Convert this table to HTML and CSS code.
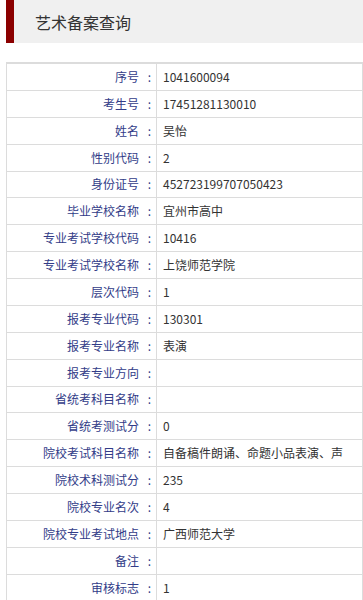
FILE: index.html
```html
<!DOCTYPE html>
<html lang="zh-CN">
<head>
<meta charset="utf-8">
<title>艺术备案查询</title>
<link rel="stylesheet" href="styles.css">
</head>
<body>
<div class="page">
  <div class="header"><span class="title">艺术备案查询</span></div>
  <table class="info">
    <tr><td class="lbl"><span>序号</span><i>:</i></td><td class="val">1041600094</td></tr>
    <tr><td class="lbl"><span>考生号</span><i>:</i></td><td class="val">17451281130010</td></tr>
    <tr><td class="lbl"><span>姓名</span><i>:</i></td><td class="val">吴怡</td></tr>
    <tr><td class="lbl"><span>性别代码</span><i>:</i></td><td class="val">2</td></tr>
    <tr><td class="lbl"><span>身份证号</span><i>:</i></td><td class="val">452723199707050423</td></tr>
    <tr><td class="lbl"><span>毕业学校名称</span><i>:</i></td><td class="val">宜州市高中</td></tr>
    <tr><td class="lbl"><span>专业考试学校代码</span><i>:</i></td><td class="val">10416</td></tr>
    <tr><td class="lbl"><span>专业考试学校名称</span><i>:</i></td><td class="val">上饶师范学院</td></tr>
    <tr><td class="lbl"><span>层次代码</span><i>:</i></td><td class="val">1</td></tr>
    <tr><td class="lbl"><span>报考专业代码</span><i>:</i></td><td class="val">130301</td></tr>
    <tr><td class="lbl"><span>报考专业名称</span><i>:</i></td><td class="val">表演</td></tr>
    <tr><td class="lbl"><span>报考专业方向</span><i>:</i></td><td class="val"></td></tr>
    <tr><td class="lbl"><span>省统考科目名称</span><i>:</i></td><td class="val"></td></tr>
    <tr><td class="lbl"><span>省统考测试分</span><i>:</i></td><td class="val">0</td></tr>
    <tr><td class="lbl"><span>院校考试科目名称</span><i>:</i></td><td class="val">自备稿件朗诵、命题小品表演、声</td></tr>
    <tr><td class="lbl"><span>院校术科测试分</span><i>:</i></td><td class="val">235</td></tr>
    <tr><td class="lbl"><span>院校专业名次</span><i>:</i></td><td class="val">4</td></tr>
    <tr><td class="lbl"><span>院校专业考试地点</span><i>:</i></td><td class="val">广西师范大学</td></tr>
    <tr><td class="lbl"><span>备注</span><i>:</i></td><td class="val"></td></tr>
    <tr><td class="lbl"><span>审核标志</span><i>:</i></td><td class="val">1</td></tr>
  </table>
</div>
</body>
</html>
```
FILE: styles.css
```css
html, body {
  margin: 0;
  padding: 0;
  background: #fff;
  overflow: hidden;
}
body {
  font-family: "Microsoft YaHei", "Noto Sans CJK SC", "Noto Sans", sans-serif;
  font-size: 12px;
  color: #333;
}
.page {
  padding-left: 6px;
}
.header {
  height: 43px;
  background: #f0f0f0;
  border-left: 8px solid #8b0000;
  display: flex;
  align-items: center;
  padding-left: 21px;
}
.title {
  font-size: 16px;
  color: #333;
}
.info {
  margin-top: 19px;
  width: 357px;
  border-collapse: collapse;
  border: 1px solid #dcdcdc;
  border-top-width: 2px;
  table-layout: fixed;
}
.info td {
  border: 1px solid #dcdcdc;
  height: 25.88px;
  padding: 0;
  white-space: nowrap;
  overflow: hidden;
  line-height: 16px;
}
.lbl {
  width: 149px;
  text-align: right;
  color: #323c88;
}
.lbl i {
  font-style: normal;
  display: inline-block;
  width: 13px;
  margin-left: 4px;
  text-align: center;
}
.val {
  padding-left: 6px !important;
  color: #333;
}
```
